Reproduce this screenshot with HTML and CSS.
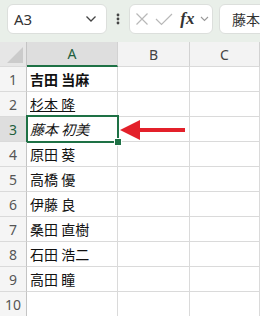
FILE: index.html
```html
<!DOCTYPE html>
<html lang="ja">
<head>
    <meta charset="UTF-8">
    <title>Excel</title>
    <link rel="stylesheet" href="styles.css">
</head>
<body>
    <div class="app">
        <!-- Formula bar -->
        <div class="toolbar">
            <div class="namebox">
                <span>A3</span>
                <svg class="chev" width="12" height="8" viewBox="0 0 12 8"><path d="M1.5 1.5 L6 6 L10.5 1.5" fill="none" stroke="#444" stroke-width="1.3"/></svg>
            </div>
            <div class="dots">
                <svg width="4" height="12" viewBox="0 0 4 12"><circle cx="2" cy="2" r="1.4" fill="#444"/><circle cx="2" cy="6" r="1.4" fill="#444"/><circle cx="2" cy="10" r="1.4" fill="#444"/></svg>
            </div>
            <div class="fbox">
                <svg width="14" height="14" viewBox="0 0 14 14"><path d="M1.5 1.5 L12.5 12.5 M12.5 1.5 L1.5 12.5" stroke="#b8b8b8" stroke-width="1.2"/></svg>
                <svg width="18" height="14" viewBox="0 0 18 14"><path d="M1 7 L6.5 12.5 L17 2" fill="none" stroke="#b8b8b8" stroke-width="1.2"/></svg>
                <span class="fx">fx</span>
                <svg width="9" height="6" viewBox="0 0 9 6"><path d="M1 1 L4.5 4.5 L8 1" fill="none" stroke="#999" stroke-width="1.1"/></svg>
            </div>
            <div class="content">藤本 初美</div>
        </div>

        <!-- Sheet -->
        <div class="sheet">
            <div class="row head">
                <div class="corner"><span class="tri"></span></div>
                <div class="ch a sel">A</div>
                <div class="ch b">B</div>
                <div class="ch c">C</div>
            </div>
            <div class="row"><div class="rh">1</div><div class="cell a bold">吉田 当麻</div><div class="cell b"></div><div class="cell c"></div></div>
            <div class="row"><div class="rh">2</div><div class="cell a"><u>杉本 隆</u></div><div class="cell b"></div><div class="cell c"></div></div>
            <div class="row">
                <div class="rh sel">3</div>
                <div class="cell a active"><i>藤本 初美</i><span class="handle"></span></div>
                <div class="cell b"></div><div class="cell c"></div>
                <svg class="arrow" width="66" height="22" viewBox="0 0 66 22"><polygon points="0,11 20,1 20,21" fill="#e3202a"/><rect x="19" y="9" width="46" height="4" fill="#e3202a"/></svg>
            </div>
            <div class="row"><div class="rh">4</div><div class="cell a">原田 葵</div><div class="cell b"></div><div class="cell c"></div></div>
            <div class="row"><div class="rh">5</div><div class="cell a">高橋 優</div><div class="cell b"></div><div class="cell c"></div></div>
            <div class="row"><div class="rh">6</div><div class="cell a">伊藤 良</div><div class="cell b"></div><div class="cell c"></div></div>
            <div class="row"><div class="rh">7</div><div class="cell a">桑田 直樹</div><div class="cell b"></div><div class="cell c"></div></div>
            <div class="row"><div class="rh">8</div><div class="cell a">石田 浩二</div><div class="cell b"></div><div class="cell c"></div></div>
            <div class="row"><div class="rh">9</div><div class="cell a">高田 瞳</div><div class="cell b"></div><div class="cell c"></div></div>
            <div class="row"><div class="rh">10</div><div class="cell a"></div><div class="cell b"></div><div class="cell c"></div></div>
        </div>
    </div>
</body>
</html>
```

FILE: styles.css
```css
body {
    margin: 0;
    font-family: "Noto Sans", "Noto Sans CJK JP", sans-serif;
    background: #fff;
}
.app {
    width: 260px;
    height: 316px;
    overflow: hidden;
}

/* Formula bar */
.toolbar {
    height: 42px;
    background: #e9efe9;
    display: flex;
    align-items: flex-start;
    padding-top: 4px;
    box-sizing: border-box;
    overflow: hidden;
}
.toolbar > div {
    flex: none;
}
.namebox, .fbox, .content {
    height: 30px;
    background: #fff;
    border: 1px solid #dcdfdc;
    border-radius: 6px;
    box-sizing: border-box;
    display: flex;
    align-items: center;
}
.namebox {
    margin-left: 7px;
    width: 100px;
    padding: 0 9px 0 6px;
    justify-content: space-between;
    font-size: 15px;
    color: #333;
}
.dots {
    width: 22px;
    height: 30px;
    display: flex;
    align-items: center;
    justify-content: center;
}
.fbox {
    width: 84px;
    padding: 0 3px 0 5px;
    justify-content: space-between;
}
.fx {
    font-family: "Liberation Serif", serif;
    font-style: italic;
    font-weight: bold;
    font-size: 17px;
    color: #333;
    margin-left: 2px;
}
.content {
    margin-left: 6px;
    width: 80px;
    padding-left: 12px;
    font-family: "Noto Sans CJK JP", sans-serif;
    font-size: 14px;
    color: #333;
    white-space: nowrap;
}

/* Sheet */
.row {
    display: flex;
    height: 25px;
    position: relative;
}
.row > div {
    box-sizing: border-box;
    border-bottom: 1px solid #dadada;
    border-right: 1px solid #dadada;
    height: 25px;
}
.corner, .rh {
    width: 27px;
    flex: none;
    background: #f5f5f5;
    border-right-color: #c4c4c4 !important;
}
.corner {
    background: #e6e6e6;
    position: relative;
}
.tri {
    position: absolute;
    right: 3px;
    bottom: 3px;
    width: 0;
    height: 0;
    border-left: 16px solid transparent;
    border-bottom: 16px solid #cbcbcb;
}
.ch {
    background: #f3f3f3;
    display: flex;
    align-items: center;
    justify-content: center;
    font-size: 14px;
    color: #444;
    border-right-color: #d2d2d2 !important;
}
.ch.sel {
    background: #dedede;
    color: #1f5f3d;
    border-bottom: 2px solid #1e7145 !important;
}
.rh {
    display: flex;
    align-items: center;
    justify-content: center;
    font-size: 14px;
    color: #555;
}
.rh.sel {
    background: #dedede;
    color: #1f5f3d;
}
.cell {
    display: flex;
    align-items: center;
    font-family: "Noto Sans CJK JP", sans-serif;
    font-size: 14px;
    color: #111;
    white-space: nowrap;
    padding-left: 3px;
}
.a { width: 91px; flex: none; }
.b { width: 72px; flex: none; }
.c { flex: 1; }
.bold { font-weight: bold; }
.cell i { font-style: italic; }
.active { position: relative; }
.active::after {
    content: "";
    position: absolute;
    left: -1px;
    top: -2px;
    right: -2px;
    bottom: -2px;
    border: 2px solid #1e7145;
}
.handle {
    position: absolute;
    right: -5px;
    bottom: -5px;
    width: 6px;
    height: 6px;
    background: #1e7145;
    border: 1px solid #fff;
    z-index: 2;
}
.arrow {
    position: absolute;
    left: 120px;
    top: 2px;
    z-index: 3;
}
```
